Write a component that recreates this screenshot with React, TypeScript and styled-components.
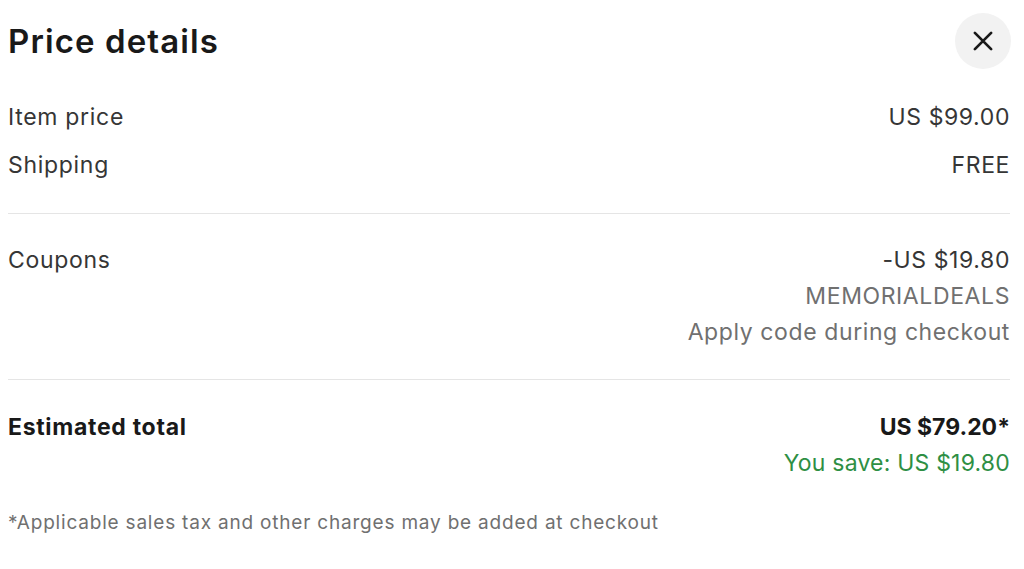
import React from "react";
import styled, { createGlobalStyle } from "styled-components";

const GlobalStyle = createGlobalStyle`
  html, body { margin: 0; padding: 0; background: #ffffff; }
  body { font-family: Inter, "Open Sans", Arial, sans-serif; color: #333333; }
`;

const Panel = styled.div`
  width: 1024px;
  box-sizing: border-box;
  padding: 0 14px 0 8px;
  display: flex;
  flex-direction: column;
`;

const Header = styled.header`
  height: 82px;
  display: flex;
  align-items: center;
  justify-content: space-between;
`;

const Title = styled.h2`
  margin: 0;
  font-size: 33px;
  font-weight: 600;
  color: #191919;
  letter-spacing: 1.1px;
`;

const CloseButton = styled.button`
  width: 56px;
  height: 56px;
  margin-right: -1px;
  border: none;
  border-radius: 50%;
  background: #f2f2f2;
  display: flex;
  align-items: center;
  justify-content: center;
  padding: 0;
  cursor: pointer;
`;

const Section = styled.section<{ $top: number; $bottom: number; $divider?: boolean }>`
  padding-top: ${(p) => p.$top}px;
  padding-bottom: ${(p) => p.$bottom}px;
  border-bottom: ${(p) => (p.$divider ? "1px solid #e5e5e5" : "none")};
  display: flex;
  flex-direction: column;
  gap: 12px;
`;

const Row = styled.div`
  display: flex;
  justify-content: space-between;
  align-items: flex-start;
`;

const Label = styled.span<{ $bold?: boolean }>`
  font-size: 23px;
  line-height: 36px;
  letter-spacing: 0.7px;
  font-weight: ${(p) => (p.$bold ? 700 : 400)};
  color: ${(p) => (p.$bold ? "#191919" : "#363636")};
`;

const Values = styled.div`
  display: flex;
  flex-direction: column;
  align-items: flex-end;
`;

const Value = styled.span<{ $tone?: "main" | "muted" | "green" | "bold" }>`
  font-size: 23px;
  line-height: 36px;
  letter-spacing: ${(p) => (p.$tone === "bold" ? "0" : p.$tone === "green" ? "0.2px" : "0.6px")};
  font-weight: ${(p) => (p.$tone === "bold" ? 700 : 400)};
  color: ${(p) =>
    p.$tone === "muted"
      ? "#707070"
      : p.$tone === "green"
      ? "#2e8f44"
      : p.$tone === "bold"
      ? "#191919"
      : "#363636"};
`;

const Footnote = styled.p`
  margin: 0;
  padding-top: 30px;
  font-size: 19px;
  line-height: 24px;
  letter-spacing: 0.8px;
  color: #707070;
`;

const CloseIcon = () => (
  <svg width="26" height="26" viewBox="0 0 24 24" fill="none">
    <path d="M4.5 4.5L19.5 19.5M19.5 4.5L4.5 19.5" stroke="#191919" strokeWidth="2.5" strokeLinecap="round" />
  </svg>
);

export default function App() {
  return (
    <>
      <GlobalStyle />
      <Panel>
        <Header>
          <Title>Price details</Title>
          <CloseButton aria-label="Close">
            <CloseIcon />
          </CloseButton>
        </Header>
        <Section $top={17} $bottom={30} $divider>
          <Row>
            <Label>Item price</Label>
            <Value>US $99.00</Value>
          </Row>
          <Row>
            <Label>Shipping</Label>
            <Value>FREE</Value>
          </Row>
        </Section>
        <Section $top={28} $bottom={29} $divider>
          <Row>
            <Label>Coupons</Label>
            <Values>
              <Value>-US $19.80</Value>
              <Value $tone="muted">MEMORIALDEALS</Value>
              <Value $tone="muted">Apply code during checkout</Value>
            </Values>
          </Row>
        </Section>
        <Section $top={29} $bottom={0}>
          <Row>
            <Label $bold>Estimated total</Label>
            <Values>
              <Value $tone="bold">US $79.20*</Value>
              <Value $tone="green">You save: US $19.80</Value>
            </Values>
          </Row>
        </Section>
        <Footnote>*Applicable sales tax and other charges may be added at checkout</Footnote>
      </Panel>
    </>
  );
}
